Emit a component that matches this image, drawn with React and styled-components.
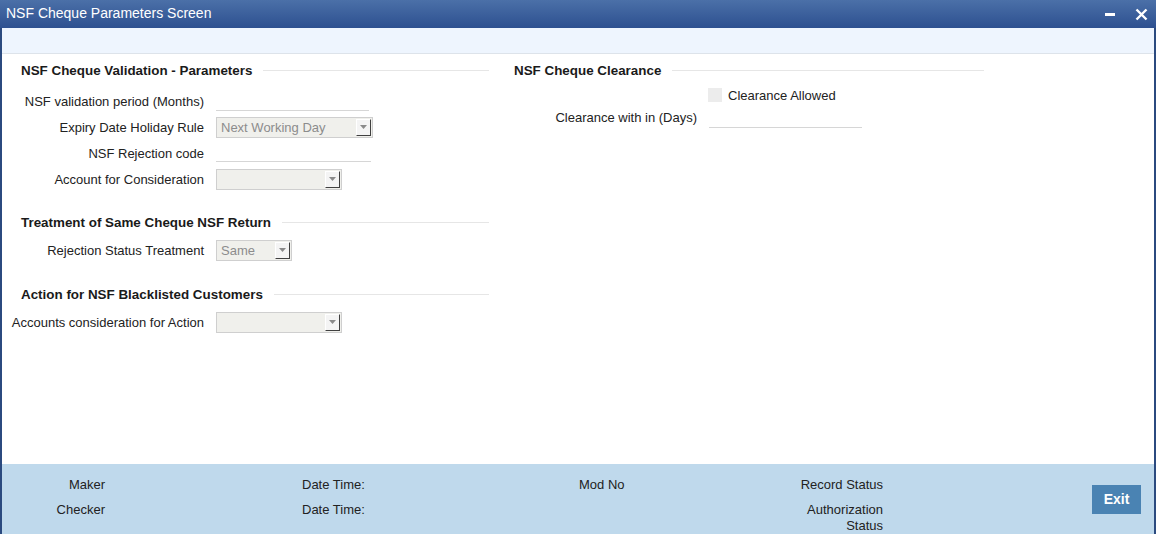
import React from "react";
import styled, { createGlobalStyle } from "styled-components";

const GlobalStyle = createGlobalStyle`
  html, body {
    margin: 0;
    padding: 0;
    background: #ffffff;
  }
  body {
    font-family: "Liberation Sans", Arial, sans-serif;
    font-size: 13px;
    color: #222222;
  }
`;

const Page = styled.div`
  width: 1156px;
  height: 541px;
  background: #ffffff;
  overflow: hidden;
`;

const Window = styled.div`
  display: flex;
  flex-direction: column;
  width: 1156px;
  height: 534px;
  box-sizing: border-box;
  border-left: 2px solid #2b4a7f;
  border-right: 2px solid #2b4a7f;
`;

const TitleBar = styled.div`
  display: flex;
  align-items: center;
  height: 28px;
  margin: 0 -2px;
  padding: 0 8px 0 6px;
  background: linear-gradient(#4b70a8, #2d5090);
  color: #ffffff;
  font-size: 14px;
  box-sizing: border-box;
`;

const Title = styled.div`
  flex: 1;
  margin-top: -2px;
`;

const TitleButton = styled.button`
  display: flex;
  align-items: center;
  justify-content: center;
  width: 14px;
  height: 14px;
  margin-left: 17px;
  padding: 0;
  border: 0;
  background: none;
`;

const Toolbar = styled.div`
  height: 25px;
  background: #eef5fe;
  border-bottom: 1px solid #dde3ea;
`;

const Content = styled.div`
  flex: 1;
  display: grid;
  grid-template-columns: 487px 477px;
  column-gap: 18px;
  padding-top: 8px;
  box-sizing: border-box;
`;

const Column = styled.div`
  display: flex;
  flex-direction: column;
`;

const Section = styled.div`
  display: flex;
  flex-direction: column;
  margin-top: ${(p) => p.$top || 0}px;
`;

const SectionHead = styled.div`
  display: flex;
  align-items: center;
  height: 16px;
  padding-left: ${(p) => p.$indent}px;
  margin-bottom: ${(p) => p.$after}px;
  font-weight: bold;
  font-size: 13.4px;
  color: #1a1a1a;

  &::after {
    content: "";
    flex: 1;
    height: 1px;
    margin-left: 11px;
    background: #e6e6e6;
  }
`;

const Row = styled.div`
  display: flex;
  align-items: center;
  height: ${(p) => p.$h || 26}px;
  margin-bottom: ${(p) => p.$after || 0}px;
`;

const Label = styled.div`
  width: ${(p) => p.$width}px;
  flex-shrink: 0;
  text-align: right;
  margin-right: 12px;
  white-space: nowrap;
`;

const LineInput = styled.div`
  width: ${(p) => p.$width}px;
  height: 20px;
  margin-top: ${(p) => p.$drop || 0}px;
  border-bottom: 1px solid #d6d6d6;
`;

const Select = styled.div`
  display: flex;
  align-items: center;
  width: ${(p) => p.$width}px;
  height: 21px;
  box-sizing: border-box;
  border: 1px solid #cfcfcf;
  background: #f0f0ec;
  color: #8c8c8c;
  font-size: 13px;
`;

const SelectText = styled.span`
  flex: 1;
  padding-left: 4px;
  white-space: nowrap;
`;

const SelectButton = styled.span`
  display: flex;
  align-items: center;
  justify-content: center;
  width: 15px;
  height: 17px;
  margin-right: 1px;
  box-sizing: border-box;
  background: #f4f4f4;
  border-top: 1px solid #ffffff;
  border-left: 1px solid #ffffff;
  border-right: 1px solid #404040;
  border-bottom: 1px solid #404040;
`;

const Check = styled.span`
  width: 14px;
  height: 14px;
  margin-left: 11px;
  margin-right: 6px;
  background: #ececec;
`;

const Footer = styled.div`
  display: flex;
  align-items: center;
  height: 70px;
  padding-right: 13px;
  background: #bfd9ec;
  box-sizing: border-box;
`;

const FooterGrid = styled.div`
  display: grid;
  grid-template-columns: 103px 197px 277px 204px 100px;
  grid-template-rows: 16px 16px 16px;
  row-gap: 9px;
  align-self: flex-start;
  margin-top: 13px;
  line-height: 16px;
  color: #222222;
`;

const FooterCell = styled.div`
  grid-column: ${(p) => p.$col};
  grid-row: ${(p) => p.$row};
  margin-top: ${(p) => p.$shift || 0}px;
  text-align: ${(p) => (p.$right ? "right" : "left")};
  white-space: nowrap;
`;

const ExitButton = styled.button`
  margin-left: auto;
  width: 49px;
  height: 29px;
  padding: 0;
  border: 0;
  background: #4a83b3;
  color: #ffffff;
  font-family: "Liberation Sans", Arial, sans-serif;
  font-size: 14px;
  font-weight: bold;
`;

function Arrow() {
  return (
    <svg width="7" height="4" viewBox="0 0 7 4">
      <path d="M0 0h7L3.5 4z" fill="#8a8a8a" />
    </svg>
  );
}

function Dropdown({ width, value }) {
  return (
    <Select $width={width}>
      <SelectText>{value}</SelectText>
      <SelectButton>
        <Arrow />
      </SelectButton>
    </Select>
  );
}

export default function App() {
  return (
    <Page>
      <GlobalStyle />
      <Window>
        <TitleBar>
          <Title>NSF Cheque Parameters Screen</Title>
          <TitleButton aria-label="minimize">
            <svg width="11" height="14" viewBox="0 0 11 14">
              <rect x="0" y="6" width="10" height="3" fill="#fff" />
            </svg>
          </TitleButton>
          <TitleButton aria-label="close">
            <svg width="13" height="13" viewBox="0 0 13 13">
              <path d="M1.5 1.5l10 10M11.5 1.5l-10 10" stroke="#fff" strokeWidth="2.4" />
            </svg>
          </TitleButton>
        </TitleBar>
        <Toolbar />
        <Content>
          <Column>
            <Section>
              <SectionHead $indent={19} $after={10}>
                NSF Cheque Validation - Parameters
              </SectionHead>
              <Row>
                <Label $width={202}>NSF validation period (Months)</Label>
                <LineInput $width={153} $drop={-1} />
              </Row>
              <Row>
                <Label $width={202}>Expiry Date Holiday Rule</Label>
                <Dropdown width={157} value="Next Working Day" />
              </Row>
              <Row>
                <Label $width={202}>NSF Rejection code</Label>
                <LineInput $width={155} $drop={-3} />
              </Row>
              <Row>
                <Label $width={202}>Account for Consideration</Label>
                <Dropdown width={126} value="" />
              </Row>
            </Section>
            <Section $top={22}>
              <SectionHead $indent={19} $after={7}>
                Treatment of Same Cheque NSF Return
              </SectionHead>
              <Row>
                <Label $width={202}>Rejection Status Treatment</Label>
                <Dropdown width={76} value="Same" />
              </Row>
            </Section>
            <Section $top={23}>
              <SectionHead $indent={19} $after={7}>
                Action for NSF Blacklisted Customers
              </SectionHead>
              <Row>
                <Label $width={202}>Accounts consideration for Action</Label>
                <Dropdown width={126} value="" />
              </Row>
            </Section>
          </Column>
          <Column>
            <Section>
              <SectionHead $indent={7} $after={10}>
                NSF Cheque Clearance
              </SectionHead>
              <Row $h={14} $after={5}>
                <Label $width={178} />
                <Check />
                <span>Clearance Allowed</span>
              </Row>
              <Row $h={20}>
                <Label $width={190}>Clearance with in (Days)</Label>
                <LineInput $width={153} $drop={0} />
              </Row>
            </Section>
          </Column>
        </Content>
        <Footer>
          <FooterGrid>
            <FooterCell $col={1} $row={1} $right>Maker</FooterCell>
            <FooterCell $col={1} $row={2} $right>Checker</FooterCell>
            <FooterCell $col={3} $row={1}>Date Time:</FooterCell>
            <FooterCell $col={3} $row={2}>Date Time:</FooterCell>
            <FooterCell $col={4} $row={1}>Mod No</FooterCell>
            <FooterCell $col={5} $row={1} $right>Record Status</FooterCell>
            <FooterCell $col={5} $row={2} $right>Authorization</FooterCell>
            <FooterCell $col={5} $row={3} $right $shift={-9}>
              Status
            </FooterCell>
          </FooterGrid>
          <ExitButton>Exit</ExitButton>
        </Footer>
      </Window>
    </Page>
  );
}
